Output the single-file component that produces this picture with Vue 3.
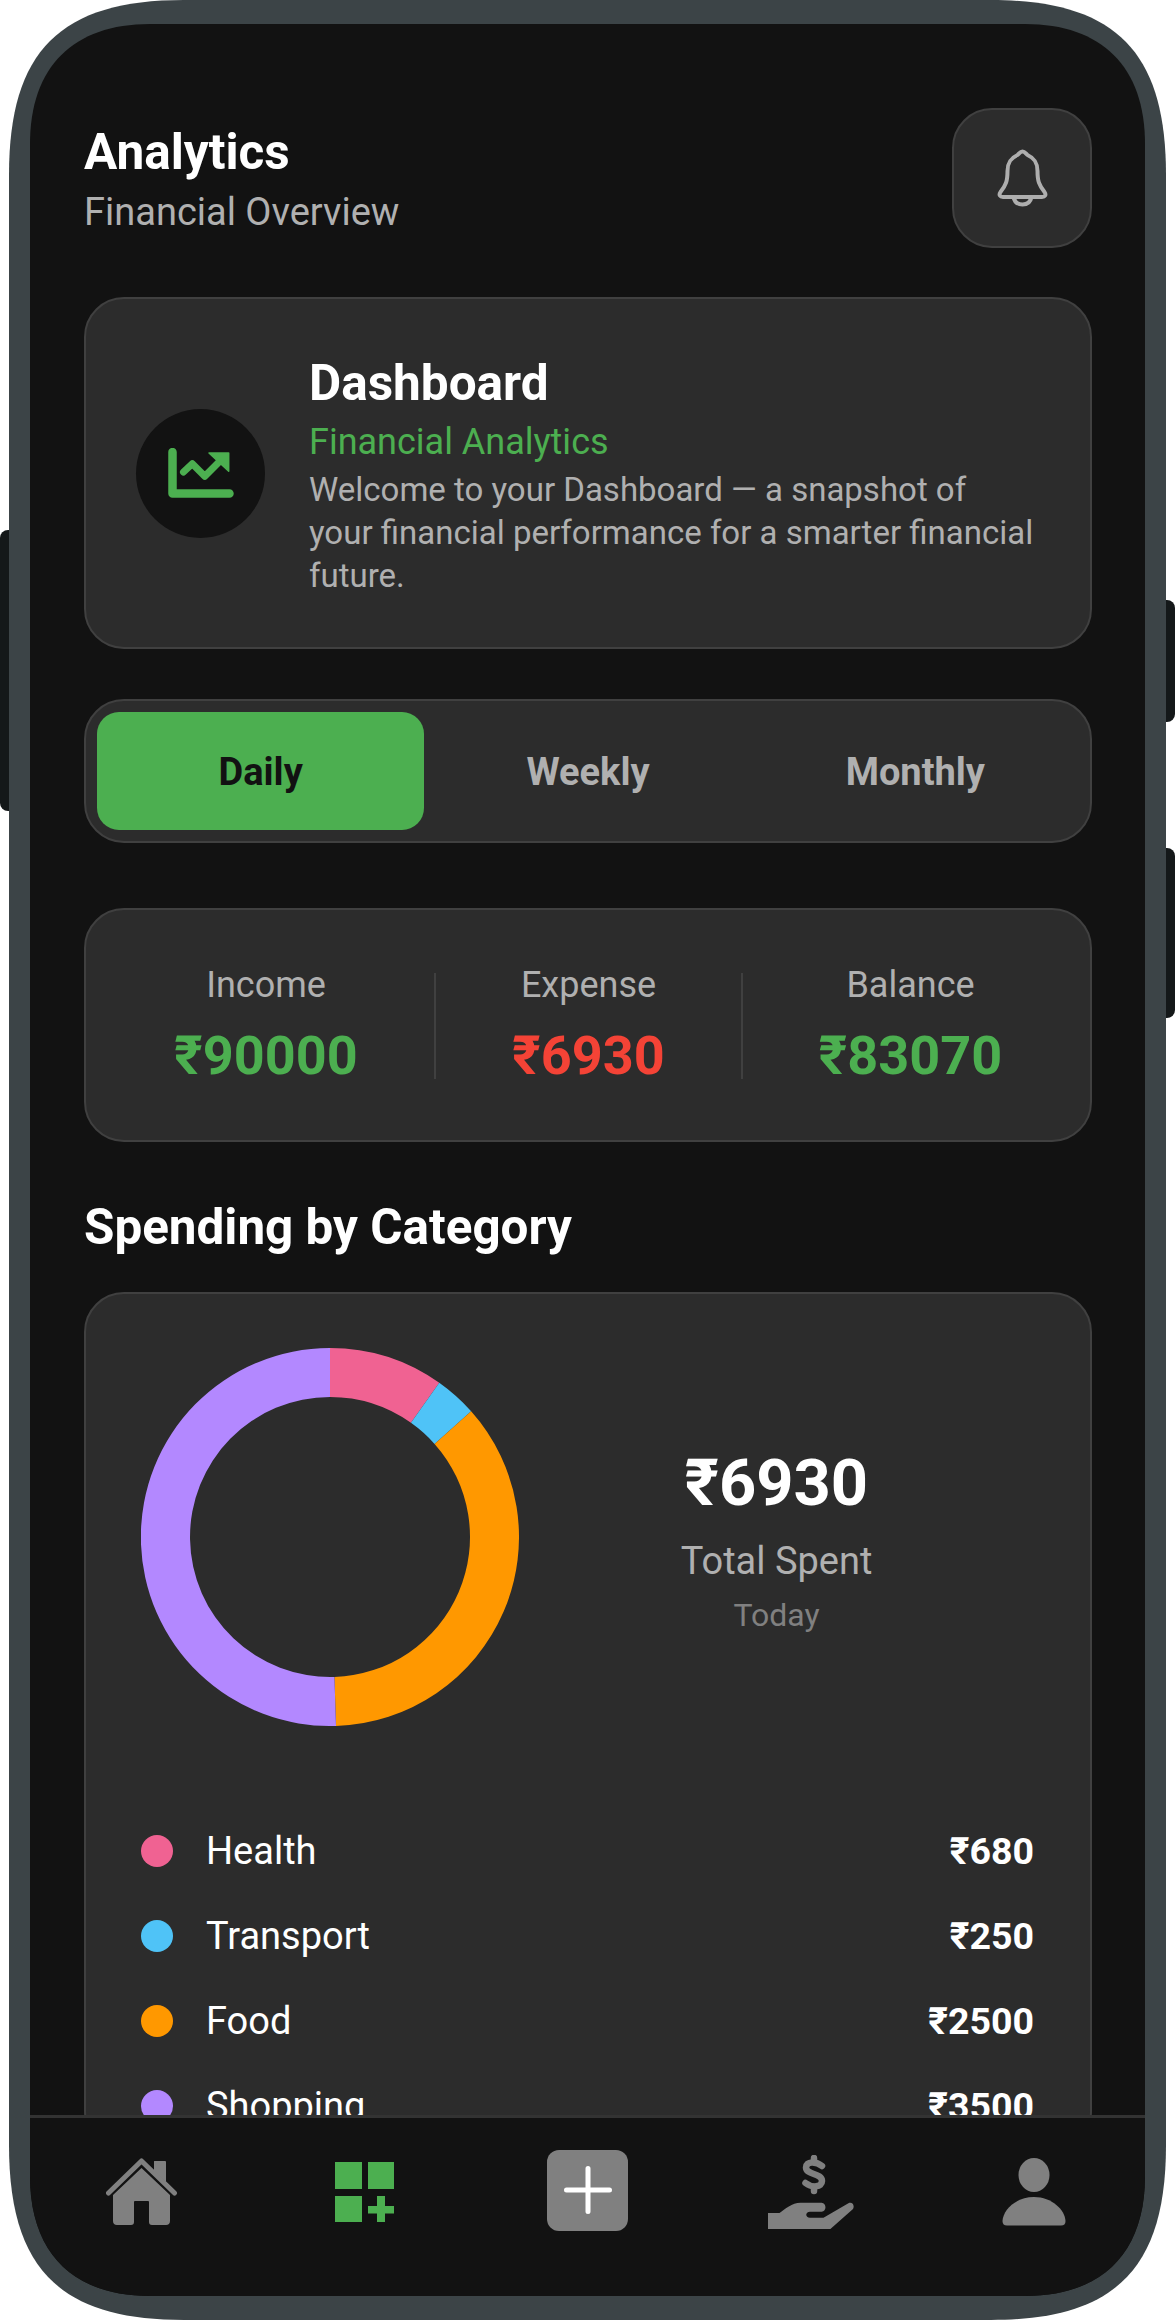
<template>
  <div class="device">
    <span class="side-btn left-btn"></span>
    <span class="side-btn right-top"></span>
    <span class="side-btn right-bottom"></span>
    <div class="shell">
      <div class="screen">
        <div class="content">
          <header class="top">
            <div>
              <h1>Analytics</h1>
              <p class="sub">Financial Overview</p>
            </div>
            <button class="bell">
              <svg width="51" height="58" viewBox="0 0 51 58" fill="none" stroke="#aeaeae" stroke-width="4" stroke-linejoin="round" stroke-linecap="round">
                <path d="M25.5 2.5C23 2.5 22.5 4.5 20.5 6C14 9 10.5 13 10.5 22C10.5 32 9 36 3.5 43C1.5 46 3 48 6 48L45 48C48 48 49.5 46 47.5 43C42 36 40.5 32 40.5 22C40.5 13 37 9 30.5 6C28.5 4.5 28 2.5 25.5 2.5Z"/>
                <path d="M16.5 48C17.5 53 21 55.5 25.5 55.5C30 55.5 33.5 53 34.5 48"/>
              </svg>
            </button>
          </header>

          <section class="card hero">
            <div class="hero-icon">
              <svg width="66" height="50" viewBox="0 0 66 50" fill="none">
                <path d="M4.5 4V45.5H61.5" stroke="#4caf50" stroke-width="8.5" stroke-linecap="round" stroke-linejoin="round"/>
                <path d="M15.5 24L24.3 15.7L36.8 28.3L52 13" stroke="#4caf50" stroke-width="7" stroke-linecap="round" stroke-linejoin="round"/>
                <path d="M41 5H60.7V23.3Z" fill="#4caf50" stroke="#4caf50" stroke-width="1.5" stroke-linejoin="round"/>
              </svg>
            </div>
            <div class="hero-text">
              <h2>Dashboard</h2>
              <p class="green">Financial Analytics</p>
              <p class="desc">Welcome to your Dashboard — a snapshot of your financial performance for a smarter financial future.</p>
            </div>
          </section>

          <div class="card tabs">
            <div v-for="t in tabs" :key="t" class="tab" :class="{ active: t === 'Daily' }">{{ t }}</div>
          </div>

          <section class="card summary">
            <div v-for="s in summary" :key="s.label" class="sum-col">
              <span class="sum-label">{{ s.label }}</span>
              <span class="sum-value" :style="{ color: s.color }">₹{{ s.value }}</span>
            </div>
          </section>

          <h3 class="section">Spending by Category</h3>

          <section class="card spend">
            <div class="chart-row">
              <svg class="donut" width="378" height="378" viewBox="0 0 378 378">
                <path v-for="a in arcs" :key="a.name" :d="a.d" :fill="a.color"/>
              </svg>
              <div class="total">
                <span class="total-num">₹6930</span>
                <span class="total-label">Total Spent</span>
                <span class="total-when">Today</span>
              </div>
            </div>
            <div class="legend">
              <div v-for="c in cats" :key="c.name" class="row">
                <span class="dot" :style="{ background: c.color }"></span>
                <span class="name">{{ c.name }}</span>
                <span class="amt">₹{{ c.amount }}</span>
              </div>
            </div>
          </section>
        </div>

        <nav class="nav">
          <div class="nav-item">
            <svg width="72" height="68" viewBox="0 0 72 68">
              <path d="M48 3.5C48 3 48.5 3 49 3H59C59.5 3 60 3.5 60 4V24L48 13Z" fill="#808080"/>
              <path d="M2.5 35L35.5 3L68.5 35" fill="none" stroke="#808080" stroke-width="5" stroke-linecap="round" stroke-linejoin="round"/>
              <path d="M35.5 10L64 37V63C64 65.5 62.5 67 60 67H46C44 67 43 66 43 64V44C43 43.5 42.5 43 42 43H29C28.5 43 28 43.5 28 44V64C28 66 27 67 25 67H11C8.5 67 7 65.5 7 63V37Z" fill="#808080"/>
            </svg>
          </div>
          <div class="nav-item">
            <svg width="59" height="60" viewBox="0 0 59 60" fill="#4caf50">
              <rect x="0" y="0" width="27" height="27"/>
              <rect x="33" y="0" width="26" height="27"/>
              <rect x="0" y="34" width="27" height="26"/>
              <rect x="42" y="34" width="8" height="26"/>
              <rect x="33" y="44" width="26" height="7.5"/>
            </svg>
          </div>
          <div class="nav-item">
            <div class="plus">
              <svg width="48" height="48" viewBox="0 0 48 48" stroke="#fff" stroke-width="5" stroke-linecap="round">
                <path d="M24 2.5V45.5M2.5 24H45.5"/>
              </svg>
            </div>
          </div>
          <div class="nav-item">
            <svg width="86" height="74" viewBox="0 0 86 74">
              <path d="M0 58H11.5C17 54 24 47.7 32.5 47.7H53.6C58.5 47.7 59 56.7 53.6 56.7H42C37 56.7 37 62.7 42 62.7H55.5L80.4 48.3C84 46.5 87 50 85 54L62.4 74H0Z" fill="#808080"/>
              <path d="M54 11C48 6 38 6 38 12.5C38 20 54 18 54 26C54 32.5 44 33 37.5 28" fill="none" stroke="#808080" stroke-width="6.5" stroke-linecap="round"/>
              <path d="M46 3V7M46 32V36" fill="none" stroke="#808080" stroke-width="6.5" stroke-linecap="round"/>
            </svg>
          </div>
          <div class="nav-item">
            <svg width="64" height="68" viewBox="0 0 64 68" fill="#808080">
              <ellipse cx="32" cy="17" rx="15.5" ry="17"/>
              <path d="M32 39C14 39 1 52 0.5 63C0.5 66 2 67.5 5 67.5H59C62 67.5 63.5 66 63.5 63C63 52 50 39 32 39Z"/>
            </svg>
          </div>
        </nav>
      </div>
    </div>
  </div>
</template>

<script setup>
const tabs = ['Daily', 'Weekly', 'Monthly']

const summary = [
  { label: 'Income', value: 90000, color: '#4caf50' },
  { label: 'Expense', value: 6930, color: '#f44336' },
  { label: 'Balance', value: 83070, color: '#4caf50' },
]

const cats = [
  { name: 'Health', amount: 680, color: '#f06292' },
  { name: 'Transport', amount: 250, color: '#4fc3f7' },
  { name: 'Food', amount: 2500, color: '#ff9800' },
  { name: 'Shopping', amount: 3500, color: '#b388ff' },
]

const total = cats.reduce((sum, c) => sum + c.amount, 0)

const point = (r, deg) => {
  const a = (deg * Math.PI) / 180
  return `${(189 + r * Math.sin(a)).toFixed(2)} ${(189 - r * Math.cos(a)).toFixed(2)}`
}

let start = 0
const arcs = cats.map((c) => {
  const sweep = (c.amount / total) * 360
  const end = start + sweep
  const big = sweep > 180 ? 1 : 0
  const d = `M${point(189, start)}A189 189 0 ${big} 1 ${point(189, end)}L${point(140, end)}A140 140 0 ${big} 0 ${point(140, start)}Z`
  start = end
  return { name: c.name, color: c.color, d }
})
</script>

<style>
html, body { background: #fff; }
</style>

<style scoped>
* { box-sizing: border-box; }
h1, h2, h3, p { margin: 0; }

.device {
  position: relative;
  width: 1157px;
  height: 2320px;
  margin: 0 9px;
  font-family: Roboto, sans-serif;
}

.shell {
  height: 100%;
  padding: 24px 21px;
  background: #3c4447;
  clip-path: path('M0 175C0 51 51 0 175 0L982 0C1106 0 1157 51 1157 175L1157 2145C1157 2269 1106 2320 982 2320L175 2320C51 2320 0 2269 0 2145Z');
}

.side-btn {
  position: absolute;
  width: 9px;
  background: #141819;
}
.left-btn { left: -9px; top: 530px; height: 281px; border-radius: 8px 0 0 8px; }
.right-top { right: -9px; top: 600px; height: 122px; border-radius: 0 8px 8px 0; }
.right-bottom { right: -9px; top: 848px; height: 170px; border-radius: 0 8px 8px 0; }

.screen {
  display: flex;
  flex-direction: column;
  height: 2272px;
  background: #121212;
  clip-path: path('M0 120C0 43 43 0 120 0L995 0C1072 0 1115 43 1115 120L1115 2152C1115 2229 1072 2272 995 2272L120 2272C43 2272 0 2229 0 2152Z');
}

.content {
  flex: 1;
  min-height: 0;
  overflow: hidden;
  padding: 84px 53px 0 54px;
}

.top {
  display: flex;
  justify-content: space-between;
  align-items: flex-start;
}
h1 {
  font-size: 49.5px;
  line-height: 56px;
  font-weight: 700;
  color: #fff;
  margin-top: 16px;
}
.sub {
  font-size: 38px;
  line-height: 44px;
  color: #b0b0b0;
  margin-top: 10px;
}
.bell {
  display: flex;
  align-items: center;
  justify-content: center;
  width: 140px;
  height: 140px;
  padding: 0;
  background: #2c2c2c;
  border: 2px solid #404040;
  border-radius: 40px;
}

.card {
  background: #2c2c2c;
  border: 2px solid #404040;
  border-radius: 40px;
}

.hero {
  display: flex;
  align-items: center;
  gap: 44px;
  height: 352px;
  margin-top: 49px;
  padding: 0 50px;
}
.hero-icon {
  display: flex;
  align-items: center;
  justify-content: center;
  flex: none;
  width: 129px;
  height: 129px;
  border-radius: 50%;
  background: #121212;
}
.hero-text {
  width: 726px;
  padding-top: 5px;
}
h2 {
  font-size: 49.5px;
  line-height: 58px;
  font-weight: 700;
  color: #fff;
}
.green {
  font-size: 36px;
  line-height: 42px;
  color: #4caf50;
  margin-top: 9px;
}
.desc {
  font-size: 33px;
  line-height: 43px;
  color: #b0b0b0;
  margin-top: 5px;
}

.tabs {
  display: flex;
  height: 144px;
  margin-top: 50px;
  padding: 11px;
}
.tab {
  flex: 1;
  display: flex;
  align-items: center;
  justify-content: center;
  padding-top: 2px;
  font-size: 38px;
  font-weight: 700;
  color: #b0b0b0;
  border-radius: 22px;
}
.tab.active {
  background: #4caf50;
  color: #121212;
}

.summary {
  display: grid;
  grid-template-columns: 348px 309px 347px;
  grid-template-rows: 106px;
  height: 234px;
  margin-top: 65px;
  padding: 63px 0;
}
.sum-col {
  display: flex;
  flex-direction: column;
  align-items: center;
  justify-content: center;
}
.sum-col:nth-child(1) { padding-left: 12px; }
.sum-col:nth-child(2) {
  border-left: 2px solid #404040;
  border-right: 2px solid #404040;
}
.sum-col:nth-child(3) { padding-right: 12px; }
.sum-label {
  flex: none;
  font-size: 36px;
  line-height: 42px;
  color: #b0b0b0;
}
.sum-value {
  flex: none;
  font-size: 54px;
  line-height: 64px;
  font-weight: 700;
  margin-top: 18px;
}

.section {
  font-size: 49.4px;
  line-height: 56px;
  font-weight: 700;
  color: #fff;
  margin-top: 57px;
}

.spend {
  margin-top: 37px;
  padding: 54px 56px 0 55px;
}
.chart-row {
  display: flex;
  align-items: flex-start;
}
.donut { flex: none; }
.total {
  flex: 1;
  display: flex;
  flex-direction: column;
  align-items: center;
  padding-top: 97px;
}
.total-num {
  font-size: 65px;
  line-height: 76px;
  font-weight: 700;
  color: #fff;
}
.total-label {
  font-size: 38px;
  line-height: 44px;
  color: #b0b0b0;
  margin-top: 18px;
}
.total-when {
  font-size: 32px;
  line-height: 38px;
  color: #808080;
  margin-top: 13px;
}

.legend { margin-top: 82.5px; }
.row {
  display: flex;
  align-items: center;
  height: 85px;
}
.dot {
  flex: none;
  width: 32px;
  height: 32px;
  border-radius: 50%;
}
.name {
  flex: 1;
  margin-left: 33px;
  font-size: 38px;
  color: #fff;
}
.amt {
  font-size: 37.5px;
  font-weight: 700;
  color: #fff;
}

.nav {
  flex: none;
  display: flex;
  height: 181px;
  padding-bottom: 30px;
  background: #121212;
  border-top: 3px solid #333;
}
.nav-item {
  flex: 1;
  display: flex;
  justify-content: center;
  align-items: center;
}
.plus {
  display: flex;
  align-items: center;
  justify-content: center;
  width: 81px;
  height: 81px;
  margin-bottom: 4px;
  background: #808080;
  border-radius: 12px;
}
</style>
